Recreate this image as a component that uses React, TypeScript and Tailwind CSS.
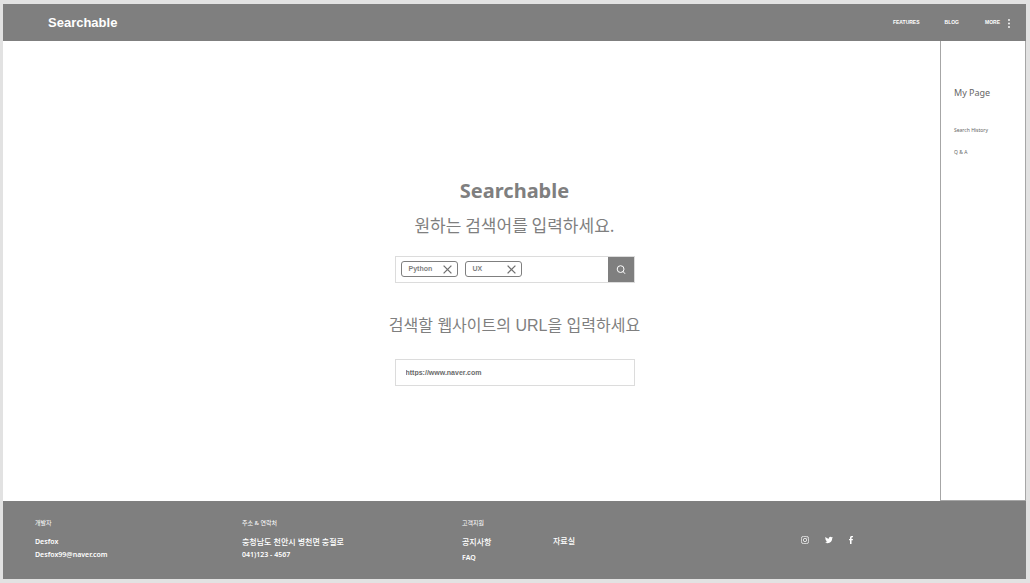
import { useState } from "react";
import type { FormEvent } from "react";

const navLinks = ["FEATURES", "BLOG"];

function SearchIcon() {
  return (
    <svg viewBox="0 0 10 10" className="size-[10px]" fill="none" stroke="currentColor" strokeWidth="1" aria-hidden="true">
      <circle cx="4.6" cy="4.1" r="3.4" />
      <path d="M7 6.500 8.800 8.500" strokeLinecap="round" />
    </svg>
  );
}

function CloseIcon() {
  return (
    <svg viewBox="0 0 9 9" className="size-[9px]" fill="none" stroke="currentColor" strokeWidth="1.3" aria-hidden="true">
      <path d="M.6.6 8.400 8.400M8.400.6.6 8.400" />
    </svg>
  );
}

function MoreIcon() {
  return (
    <svg viewBox="0 0 2 9" className="h-[9px] w-[2px]" fill="currentColor" aria-hidden="true">
      <circle cx="1" cy="1" r=".9" />
      <circle cx="1" cy="4.500" r=".9" />
      <circle cx="1" cy="8" r=".9" />
    </svg>
  );
}

function InstagramIcon() {
  return (
    <svg viewBox="0 0 24 24" className="size-2" fill="none" stroke="currentColor" strokeWidth="2.200" aria-hidden="true">
      <rect x="1.200" y="1.200" width="21.600" height="21.600" rx="6" />
      <circle cx="12" cy="12" r="5" />
      <circle cx="18" cy="6" r="1.400" fill="currentColor" stroke="none" />
    </svg>
  );
}

function TwitterIcon() {
  return (
    <svg viewBox="0 0 24 24" className="size-2" fill="currentColor" aria-hidden="true">
      <path d="M24 4.600a10 10 0 0 1-2.800.8 5 5 0 0 0 2.100-2.700 10 10 0 0 1-3.100 1.200 4.900 4.900 0 0 0-8.400 4.500A14 14 0 0 1 1.700 3.100a4.900 4.900 0 0 0 1.500 6.600 5 5 0 0 1-2.200-.6v.1a4.900 4.900 0 0 0 3.900 4.800 5 5 0 0 1-2.200.1 4.900 4.900 0 0 0 4.600 3.400A9.900 9.900 0 0 1 0 19.500a14 14 0 0 0 7.500 2.200c9.100 0 14-7.500 14-14v-.6A10 10 0 0 0 24 4.600z" />
    </svg>
  );
}

function FacebookIcon() {
  return (
    <svg viewBox="0 0 12 24" className="h-2 w-1" fill="currentColor" aria-hidden="true">
      <path d="M3 24V13H0V9h3V6c0-4 2-6 5.500-6H12v4H9.500C8 4 7.600 4.700 7.600 6v3H12l-.6 4H7.600v11z" />
    </svg>
  );
}

function Tag({ label, onRemove }: { label: string; onRemove: () => void }) {
  return (
    <li className="flex h-4 w-[57px] items-center justify-between rounded-[3px] border border-[#7f7f7f] pr-[5px] pl-[7px]">
      <span className="text-[7px] font-bold">{label}</span>
      <button type="button" aria-label={`Remove ${label}`} onClick={onRemove} className="text-[#707070]">
        <CloseIcon />
      </button>
    </li>
  );
}

function SearchPanel() {
  const [tags, setTags] = useState(["Python", "UX"]);
  const [term, setTerm] = useState("");
  const [url, setUrl] = useState("https://www.naver.com");

  function submit(event: FormEvent) {
    event.preventDefault();
    const next = term.trim();
    if (next && !tags.includes(next)) setTags([...tags, next]);
    setTerm("");
  }

  return (
    <form onSubmit={submit} className="flex flex-col items-center text-[#7f7f7f]">
      <h1 className="font-['Noto_Sans','Open_Sans',sans-serif] text-[20px] leading-7 font-bold">Searchable</h1>
      <label htmlFor="term" className="mt-2 font-['Noto_Sans_CJK_KR',sans-serif] text-[17px] leading-6">
        원하는 검색어를 입력하세요.
      </label>
      <div className="mt-[19px] flex h-[27px] w-60 border border-[#dcdcdc]">
        <ul className="flex items-center gap-[7px] pb-px pl-[5px]">
          {tags.map((tag) => (
            <Tag key={tag} label={tag} onRemove={() => setTags(tags.filter((t) => t !== tag))} />
          ))}
        </ul>
        <input
          id="term"
          value={term}
          onChange={(event) => setTerm(event.target.value)}
          className="min-w-0 flex-1 px-2 text-[7px] font-bold outline-none"
        />
        <button type="submit" aria-label="Search" className="flex w-[26px] items-center justify-center bg-[#7f7f7f] text-white">
          <SearchIcon />
        </button>
      </div>
      <label htmlFor="url" className="mt-[31px] font-['Liberation_Sans','Noto_Sans_CJK_KR',sans-serif] text-[16px] leading-6">
        검색할 웹사이트의 URL을 입력하세요
      </label>
      <input
        id="url"
        type="url"
        value={url}
        onChange={(event) => setUrl(event.target.value)}
        className="mt-[21px] h-[27px] w-60 border border-[#dcdcdc] px-[10px] text-[7px] font-bold text-[#6a6a6a] outline-none"
      />
    </form>
  );
}

export default function App() {
  return (
    <div className="flex min-h-screen flex-col bg-[#e2e2e2] pt-1 pr-1 pb-1 pl-[3px] font-['Liberation_Sans','Noto_Sans_CJK_KR',sans-serif]">
      <header className="flex h-[37px] items-center justify-between bg-[#7f7f7f] pr-4 pl-[45px] text-white">
        <a href="#home" className="text-[13px] font-bold">Searchable</a>
        <nav className="flex items-center gap-[25px] pt-px text-[5px] font-bold">
          {navLinks.map((link) => (
            <a key={link} href={`#${link.toLowerCase()}`}>{link}</a>
          ))}
          <button type="button" className="ml-px flex items-center gap-2">
            MORE
            <MoreIcon />
          </button>
        </nav>
      </header>

      <div className="grid flex-1 grid-cols-[86px_1fr_86px] bg-white">
        <main className="col-start-2 pt-[136px]">
          <SearchPanel />
        </main>
        <aside className="border border-t-0 border-[#a6a6a6] pt-[42px] pl-[13px] font-['Noto_Sans','Open_Sans',sans-serif] text-[#666666]">
          <h2 className="text-[9px] leading-5">My Page</h2>
          <nav className="mt-4 flex flex-col text-[5px] leading-[22px]">
            <a href="#history">Search History</a>
            <a href="#qna">Q &amp; A</a>
          </nav>
        </aside>
      </div>

      <footer className="grid h-[78px] grid-cols-[207px_220px_91px_1fr_auto] bg-[#7f7f7f] pt-[18px] pr-[173px] pl-8 font-['Noto_Sans','Noto_Sans_CJK_KR',sans-serif] text-[7px] leading-[13px] text-white">
        <section>
          <h2 className="text-[6px] leading-2">개발자</h2>
          <p className="mt-2 font-semibold">Desfox</p>
          <a href="mailto:Desfox99@naver.com" className="block font-semibold">Desfox99@naver.com</a>
        </section>
        <section>
          <h2 className="text-[6px] leading-2">주소 &amp; 연락처</h2>
          <p className="mt-2 text-[8px] leading-[13px] font-medium">충청남도 천안시 병천면 충절로</p>
          <p className="font-semibold">041)123 - 4567</p>
        </section>
        <section>
          <h2 className="text-[6px] leading-2">고객지원</h2>
          <a href="#notice" className="mt-2 block text-[8px] leading-[13px] font-medium">공지사항</a>
          <a href="#faq" className="mt-[3px] block font-semibold">FAQ</a>
        </section>
        <a href="#archive" className="mt-[15px] self-start text-[8px] leading-[13px] font-medium">자료실</a>
        <div className="mt-[17px] flex items-center gap-4 self-start">
          <a href="#instagram" aria-label="Instagram"><InstagramIcon /></a>
          <a href="#twitter" aria-label="Twitter"><TwitterIcon /></a>
          <a href="#facebook" aria-label="Facebook"><FacebookIcon /></a>
        </div>
      </footer>
    </div>
  );
}
